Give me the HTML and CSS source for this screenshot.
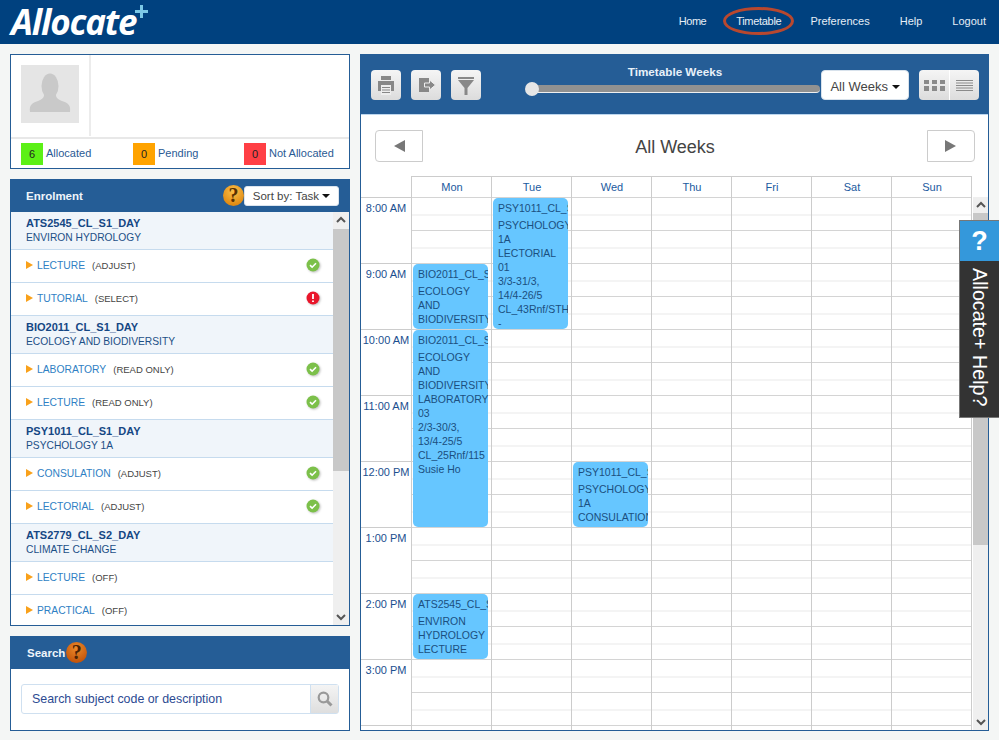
FILE: index.html
```html
<!DOCTYPE html>
<html lang="en">

<head>
  <meta charset="UTF-8" />
  <meta name="viewport" content="width=device-width, initial-scale=1.0" />
  <title>Allocate+ Timetable</title>
  <link rel="stylesheet" href="styles.css">
</head>

<body>
  <header class="topbar">
    <div class="logo">Allocate
      <svg class="logo-plus" width="13" height="13" viewBox="0 0 13 13"><path d="M5 0h3v5h5v3H8v5H5V8H0V5h5z" fill="#7cc8e6" /></svg>
    </div>
    <nav class="menu">
      <a class="menu-home">Home</a>
      <a class="menu-timetable">Timetable<span class="menu-ring"></span></a>
      <a class="menu-prefs">Preferences</a>
      <a class="menu-help">Help</a>
      <a class="menu-logout">Logout</a>
    </nav>
  </header>

  <main class="page">
    <div class="columna-izq">
      <section class="perfil">
        <div class="perfil-top">
          <div class="perfil-foto">
            <svg class="avatar" width="58" height="58" viewBox="0 0 58 58">
              <rect width="58" height="58" fill="#e5e5e5" />
              <ellipse cx="29" cy="21" rx="8.5" ry="12.5" fill="#c9c9c9" />
              <path d="M9 47c-1-7 2-9 8-11 5-2 6-4 6-6h12c0 2 1 4 6 6 6 2 9 4 8 11z" fill="#c9c9c9" />
            </svg>
          </div>
        </div>
        <div class="leyenda">
          <div class="leyenda-item item-a"><span class="caja caja-verde">6</span>Allocated</div>
          <div class="leyenda-item item-b"><span class="caja caja-naranja">0</span>Pending</div>
          <div class="leyenda-item"><span class="caja caja-roja">0</span>Not Allocated</div>
        </div>
      </section>

      <section class="panel enrolment">
        <div class="panel-head">
          <span class="panel-titulo">Enrolment</span>
          <span class="ayuda ayuda-sort">?</span>
          <button class="sort-btn">Sort by: Task <span class="caret"></span></button>
        </div>
        <div class="enrolment-body">
          <div class="lista">
            <div class="grupo"><b>ATS2545_CL_S1_DAY</b><span>ENVIRON HYDROLOGY</span></div>
            <div class="fila"><i class="bala"></i><a>LECTURE</a><small>(ADJUST)</small><svg class="estado" width="14" height="14" viewBox="0 0 14 14"><circle cx="7" cy="7" r="6.5" fill="#7cc04a" /><path d="M4 7.2l2.1 2 3.9-4" fill="none" stroke="#fff" stroke-width="1.6" /></svg></div>
            <div class="fila"><i class="bala"></i><a>TUTORIAL</a><small>(SELECT)</small><svg class="estado" width="14" height="14" viewBox="0 0 14 14"><circle cx="7" cy="7" r="6.5" fill="#e9162b" /><path d="M7 3v5M7 9.500v1.600" fill="none" stroke="#fff" stroke-width="1.8" /></svg></div>
            <div class="grupo"><b>BIO2011_CL_S1_DAY</b><span>ECOLOGY AND BIODIVERSITY</span></div>
            <div class="fila"><i class="bala"></i><a>LABORATORY</a><small>(READ ONLY)</small><svg class="estado" width="14" height="14" viewBox="0 0 14 14"><circle cx="7" cy="7" r="6.5" fill="#7cc04a" /><path d="M4 7.2l2.1 2 3.9-4" fill="none" stroke="#fff" stroke-width="1.6" /></svg></div>
            <div class="fila"><i class="bala"></i><a>LECTURE</a><small>(READ ONLY)</small><svg class="estado" width="14" height="14" viewBox="0 0 14 14"><circle cx="7" cy="7" r="6.5" fill="#7cc04a" /><path d="M4 7.2l2.1 2 3.9-4" fill="none" stroke="#fff" stroke-width="1.6" /></svg></div>
            <div class="grupo"><b>PSY1011_CL_S1_DAY</b><span>PSYCHOLOGY 1A</span></div>
            <div class="fila"><i class="bala"></i><a>CONSULATION</a><small>(ADJUST)</small><svg class="estado" width="14" height="14" viewBox="0 0 14 14"><circle cx="7" cy="7" r="6.5" fill="#7cc04a" /><path d="M4 7.2l2.1 2 3.9-4" fill="none" stroke="#fff" stroke-width="1.6" /></svg></div>
            <div class="fila"><i class="bala"></i><a>LECTORIAL</a><small>(ADJUST)</small><svg class="estado" width="14" height="14" viewBox="0 0 14 14"><circle cx="7" cy="7" r="6.5" fill="#7cc04a" /><path d="M4 7.2l2.1 2 3.9-4" fill="none" stroke="#fff" stroke-width="1.6" /></svg></div>
            <div class="grupo"><b>ATS2779_CL_S2_DAY</b><span>CLIMATE CHANGE</span></div>
            <div class="fila"><i class="bala"></i><a>LECTURE</a><small>(OFF)</small></div>
            <div class="fila"><i class="bala"></i><a>PRACTICAL</a><small>(OFF)</small></div>
          </div>
          <div class="scroll scroll-izq">
            <svg class="flecha" width="16" height="16" viewBox="0 0 16 16"><path d="M4 10l4-4 4 4" fill="none" stroke="#555" stroke-width="2" /></svg>
            <div class="scroll-pista"><div class="scroll-thumb"></div></div>
            <svg class="flecha" width="16" height="16" viewBox="0 0 16 16"><path d="M4 6l4 4 4-4" fill="none" stroke="#555" stroke-width="2" /></svg>
          </div>
        </div>
      </section>

      <section class="panel busqueda">
        <div class="panel-head panel-head-search">
          <span class="panel-titulo">Search</span>
          <span class="ayuda ayuda-search">?</span>
        </div>
        <div class="busqueda-body">
          <div class="campo">
            <input class="campo-input" type="text" placeholder="Search subject code or description">
            <span class="campo-btn">
              <svg width="18" height="18" viewBox="0 0 18 18"><circle cx="7.500" cy="7.500" r="4.800" fill="none" stroke="#999" stroke-width="2.200" /><path d="M11 11l4.500 4.500" stroke="#999" stroke-width="3" /></svg>
            </span>
          </div>
        </div>
      </section>
    </div>

    <section class="panel horario">
      <div class="toolbar">
        <button class="tool-btn">
          <svg width="30" height="30" viewBox="0 0 30 30">
            <rect x="10" y="6" width="10" height="4" fill="#888" />
            <rect x="7" y="11" width="16" height="10" fill="#888" />
            <rect x="10" y="15" width="10" height="10" fill="#eee" />
            <path d="M11 17.500h8M11 20h8M11 22.500h8" stroke="#888" />
          </svg>
        </button>
        <button class="tool-btn">
          <svg width="30" height="30" viewBox="0 0 30 30">
            <rect x="8" y="8" width="10" height="14" fill="#888" />
            <path d="M13.500 13h5v-3l6 5-6 5v-3h-5z" fill="#888" stroke="#eee" />
          </svg>
        </button>
        <button class="tool-btn">
          <svg width="30" height="30" viewBox="0 0 30 30">
            <rect x="7" y="7" width="16" height="2" fill="#888" />
            <path d="M7 10h16l-6.500 8v7h-3v-7z" fill="#888" />
          </svg>
        </button>
        <div class="semanas">
          <div class="semanas-titulo">Timetable Weeks</div>
          <div class="slider"><span class="slider-punto"></span></div>
        </div>
        <button class="select-semanas">All Weeks <span class="caret"></span></button>
        <div class="vistas">
          <span class="vista">
            <svg width="21" height="11" viewBox="0 0 21 11"><path d="M0 0h5v4H0zM8 0h5v4H8zM16 0h5v4h-5zM0 6h5v5H0zM8 6h5v5H8zM16 6h5v5h-5z" fill="#8a8a8a" /></svg>
          </span>
          <span class="vista">
            <svg width="17" height="11" viewBox="0 0 17 11"><path d="M0 .5h17M0 3h17M0 5.500h17M0 8h17M0 10.500h17" stroke="#8a8a8a" /></svg>
          </span>
        </div>
      </div>

      <div class="semana-nav">
        <button class="nav-btn nav-prev"><i class="tri-izq"></i></button>
        <h2 class="semana-titulo">All Weeks</h2>
        <button class="nav-btn nav-next"><i class="tri-der"></i></button>
      </div>

      <div class="dias">
        <div class="dia">Mon</div>
        <div class="dia">Tue</div>
        <div class="dia">Wed</div>
        <div class="dia">Thu</div>
        <div class="dia">Fri</div>
        <div class="dia">Sat</div>
        <div class="dia dia-ultimo">Sun</div>
      </div>

      <div class="calendario">
        <div class="horas">
          <div class="hora">8:00 AM</div>
          <div class="hora">9:00 AM</div>
          <div class="hora">10:00 AM</div>
          <div class="hora">11:00 AM</div>
          <div class="hora">12:00 PM</div>
          <div class="hora">1:00 PM</div>
          <div class="hora">2:00 PM</div>
          <div class="hora">3:00 PM</div>
          <div class="hora"></div>
        </div>
        <div class="col">
          <div class="evento ev-mon-9">
            <div class="ev-titulo">BIO2011_CL_S1_DAY</div>
            ECOLOGY AND BIODIVERSITY
          </div>
          <div class="evento ev-mon-10">
            <div class="ev-titulo">BIO2011_CL_S1_DAY</div>
            ECOLOGY AND BIODIVERSITY<br>LABORATORY<br>03<br>2/3-30/3,<br>13/4-25/5<br>CL_25Rnf/115<br>Susie Ho
          </div>
          <div class="evento ev-mon-14">
            <div class="ev-titulo">ATS2545_CL_S1_DAY</div>
            ENVIRON HYDROLOGY<br>LECTURE
          </div>
        </div>
        <div class="col">
          <div class="evento ev-tue-8">
            <div class="ev-titulo">PSY1011_CL_S1_DAY</div>
            PSYCHOLOGY 1A<br>LECTORIAL<br>01<br>3/3-31/3,<br>14/4-26/5<br>CL_43Rnf/STH<br>-
          </div>
        </div>
        <div class="col">
          <div class="evento ev-wed-12">
            <div class="ev-titulo">PSY1011_CL_S1_DAY</div>
            PSYCHOLOGY 1A<br>CONSULATION
          </div>
        </div>
        <div class="col"></div>
        <div class="col"></div>
        <div class="col"></div>
        <div class="col col-ultima"></div>
        <div class="scroll scroll-der">
          <svg class="flecha" width="16" height="16" viewBox="0 0 16 16"><path d="M4 10l4-4 4 4" fill="none" stroke="#555" stroke-width="2" /></svg>
          <div class="scroll-pista"><div class="scroll-thumb"></div></div>
          <svg class="flecha" width="16" height="16" viewBox="0 0 16 16"><path d="M4 6l4 4 4-4" fill="none" stroke="#555" stroke-width="2" /></svg>
        </div>
      </div>
    </section>
  </main>

  <aside class="help-tab">
    <div class="help-tab-icono">?</div>
    <div class="help-tab-texto">Allocate+ Help?</div>
  </aside>
</body>

</html>
```

FILE: styles.css
```css
* {
  box-sizing: border-box;
}

body {
  font-family: "Liberation Sans", Arial, sans-serif;
  font-size: 11px;
  margin: 0;
  height: 740px;
  overflow: hidden;
  background-color: #f4f6f5;
  color: #1c4f86;
}

button {
  font-family: inherit;
  padding: 0;
}

/* top bar */
.topbar {
  height: 44px;
  background-color: #00417f;
  display: flex;
  justify-content: space-between;
  padding: 0 13px 0 10px;
}

.logo {
  font-family: "Open Sans", sans-serif;
  font-style: italic;
  font-weight: 700;
  font-size: 35px;
  line-height: 44px;
  letter-spacing: -1.2px;
  color: white;
  position: relative;
  width: 140px;
  padding-left: 1px;
  white-space: nowrap;
}

.logo-plus {
  position: absolute;
  left: 125px;
  top: 5px;
}

.menu {
  display: flex;
  align-items: center;
  color: #e6eef6;
  font-size: 11px;
  padding-bottom: 3px;
}

.menu a {
  position: relative;
  margin-right: 30px;
}

.menu a:last-child {
  margin-right: 0;
}

.menu-home {
  letter-spacing: -0.5px;
}

.menu a.menu-timetable {
  letter-spacing: -0.3px;
  margin-right: 29px;
}

.menu-ring {
  position: absolute;
  left: -13px;
  right: -13px;
  top: -8px;
  bottom: -8px;
  border: 3px solid #b8482f;
  border-radius: 50%;
}

/* main layout */
.page {
  display: flex;
  gap: 10px;
  padding: 10px 10px 0;
}

.columna-izq {
  width: 340px;
  display: flex;
  flex-direction: column;
  gap: 10px;
}

.perfil {
  height: 115px;
  background: white;
  border: 1px solid #255d96;
}

.perfil-top {
  height: 84px;
  border-bottom: 2px solid #e8e8e8;
}

.perfil-foto {
  width: 80px;
  height: 81px;
  padding: 10px;
  border-right: 2px solid #ececec;
}

.avatar {
  display: block;
}

.leyenda {
  display: flex;
  padding: 4px 0 0 10px;
}

.leyenda-item {
  display: flex;
  align-items: center;
  gap: 3px;
  height: 20px;
  color: #2a5a94;
}

.item-a {
  width: 112px;
}

.item-b {
  width: 111px;
}

.caja {
  width: 22px;
  height: 22px;
  flex: none;
  align-self: flex-start;
  display: flex;
  justify-content: center;
  align-items: center;
  color: #222;
}

.caja-verde {
  background-color: #5cf016;
}

.caja-naranja {
  background-color: #ffa300;
}

.caja-roja {
  background-color: #ff3f45;
}

/* panels */
.panel {
  background: white;
  border: 1px solid #255d96;
  border-top: none;
}

.panel-head {
  height: 33px;
  background-color: #255d96;
  margin: 0 -1px;
  display: flex;
  align-items: center;
  padding: 0 11px 0 16px;
}

.panel-titulo {
  font-weight: bold;
  color: #eef4fa;
  font-size: 11.500px;
}

.ayuda {
  width: 21px;
  height: 21px;
  border-radius: 50%;
  background: radial-gradient(circle at 50% 30%, #fbc04a, #e08a12 75%);
  color: #5a3000;
  font-family: "Liberation Serif", serif;
  font-weight: bold;
  font-size: 20px;
  line-height: 21px;
  text-align: center;
}

.ayuda-sort {
  margin-left: auto;
}

.ayuda-search {
  background: radial-gradient(circle at 50% 30%, #ec8a2a, #c4560c 75%);
  color: #4a2206;
  margin-left: 1px;
}

.sort-btn {
  width: 95px;
  height: 20px;
  background: white;
  border: 1px solid #dbe4ee;
  border-radius: 3px;
  color: #444;
  font-size: 11.500px;
}

.caret {
  display: inline-block;
  vertical-align: middle;
  border-left: 4px solid transparent;
  border-right: 4px solid transparent;
  border-top: 4px solid #111;
}

/* enrolment list */
.enrolment {
  height: 447px;
  display: flex;
  flex-direction: column;
}

.enrolment-body {
  flex: 1;
  display: flex;
  min-height: 0;
}

.lista {
  flex: 1;
  overflow: hidden;
}

.grupo {
  height: 38px;
  padding-top: 4px;
  line-height: 14px;
  background-color: #f0f5fa;
  border-bottom: 1px solid #c6dbee;
  padding-left: 15px;
}

.grupo b,
.grupo span {
  display: block;
}

.grupo b {
  color: #154784;
}

.grupo span {
  font-size: 10.250px;
  margin-top: 1px;
}

.fila {
  height: 33px;
  display: flex;
  align-items: center;
  padding: 0 13px 2px 15px;
  border-bottom: 1px solid #c6dbee;
  background: white;
}

.bala {
  border-left: 7px solid #f9a11b;
  border-top: 4px solid transparent;
  border-bottom: 4px solid transparent;
  margin-right: 4px;
}

.fila a {
  color: #2f7fc4;
  font-size: 10.300px;
  margin-right: 7px;
}

.fila small {
  font-size: 9.500px;
  color: #444;
}

.estado {
  margin-left: auto;
  filter: drop-shadow(1px 1px 1px rgba(0, 0, 0, 0.25));
}

/* scrollbars */
.scroll {
  width: 16px;
  display: flex;
  flex-direction: column;
  background-color: #efefef;
}

.scroll-pista {
  flex: 1;
}

.scroll-thumb {
  background-color: #c8c8c8;
}

.scroll-izq .scroll-thumb {
  height: 242px;
  margin-top: 1px;
}

.scroll-der .scroll-thumb {
  height: 332px;
}

.flecha {
  display: block;
  flex: none;
}

/* search */
.busqueda {
  height: 95px;
}

.panel-head-search {
  padding-left: 17px;
}

.busqueda-body {
  padding: 15px 10px;
}

.campo {
  display: flex;
  height: 30px;
  border: 1px solid #cfe0f0;
  border-radius: 3px;
}

.campo-input {
  flex: 1;
  min-width: 0;
  border: none;
  outline: none;
  background: transparent;
  padding: 0 10px;
  font-family: inherit;
  font-size: 12.400px;
}

.campo-input::placeholder {
  color: #2c4a92;
  opacity: 1;
}

.campo-btn {
  width: 28px;
  display: flex;
  justify-content: center;
  align-items: center;
  background: linear-gradient(#f4f4f4, #dedede);
  border-left: 1px solid #cfe0f0;
}

/* timetable */
.horario {
  flex: 1;
  height: 677px;
  overflow: hidden;
}

.toolbar {
  height: 61px;
  background-color: #255d96;
  border-bottom: 1px solid #bcd6ee;
  display: flex;
  align-items: flex-start;
  gap: 10px;
  padding: 16px 9px 0 10px;
}

.tool-btn {
  width: 30px;
  height: 30px;
  background: linear-gradient(#f5f5f5, #dcdcdc);
  border: none;
  border-radius: 4px;
  flex: none;
}

.tool-btn svg {
  display: block;
}

.semanas {
  width: 296px;
  flex: none;
  margin: -5px -10px 0 34px;
}

.semanas-titulo {
  font-weight: bold;
  font-size: 11.700px;
  color: #e8f1f9;
  line-height: 14px;
  text-align: center;
  padding-left: 4px;
}

.slider {
  position: relative;
  height: 8px;
  margin: 6px 1px 0 5px;
  background-color: #919191;
  border-bottom: 1px solid #f0f0f0;
  border-radius: 0 4px 4px 0;
}

.slider-punto {
  position: absolute;
  left: -5px;
  top: -3px;
  width: 14px;
  height: 14px;
  border-radius: 50%;
  background-color: #e6e6e6;
}

.select-semanas {
  width: 88px;
  height: 30px;
  background: white;
  border: 1px solid #d8e2ec;
  border-radius: 4px;
  padding-top: 2px;
  color: #444;
  font-size: 13px;
  flex: none;
}

.vistas {
  width: 60px;
  height: 30px;
  display: flex;
  background: linear-gradient(#f5f5f5, #dcdcdc);
  border-radius: 4px;
  flex: none;
}

.vista {
  width: 30px;
  display: flex;
  justify-content: center;
  align-items: center;
}

.vista+.vista {
  border-left: 1px solid #fff;
}

.semana-nav {
  height: 61px;
  display: flex;
  justify-content: space-between;
  align-items: flex-start;
  padding: 15px 13px 0 14px;
}

.nav-btn {
  width: 48px;
  height: 32px;
  background: white;
  border: 1px solid #ccc;
  display: flex;
  justify-content: center;
  align-items: center;
}

.nav-prev {
  border-radius: 4px 0 0 4px;
}

.nav-next {
  border-radius: 0 4px 4px 0;
}

.tri-izq {
  border-right: 11px solid #777;
  border-top: 6px solid transparent;
  border-bottom: 6px solid transparent;
}

.tri-der {
  border-left: 11px solid #777;
  border-top: 6px solid transparent;
  border-bottom: 6px solid transparent;
}

.semana-titulo {
  margin: 0;
  font-weight: normal;
  font-size: 18px;
  line-height: 34px;
  color: #444;
}

.dias {
  display: flex;
  padding-left: 50px;
  height: 21px;
}

.dia {
  width: 80px;
  line-height: 20px;
  text-align: center;
  padding-left: 1px;
  border-left: 1px solid #ccc;
  border-top: 1px solid #ccc;
  color: #1b5aa0;
}

.dia-ultimo {
  width: 81px;
  border-right: 1px solid #ccc;
}

.calendario {
  display: flex;
  height: 533px;
  overflow: hidden;
  background: white;
}

.horas {
  width: 50px;
  flex: none;
}

.hora {
  height: 66px;
  border-top: 1px solid #ccc;
  padding-top: 3px;
  line-height: 14px;
  text-align: center;
  color: #1b4f8f;
}

.col {
  position: relative;
  width: 80px;
  flex: none;
  height: 100%;
  border-left: 1px solid #ccc;
  background-image: repeating-linear-gradient(to bottom, #d4d4d4 0 1px, #fff 1px 17px, #f4f4f4 17px 19px, #fff 19px 33px);
}

.col-ultima {
  width: 81px;
  border-right: 1px solid #ccc;
}

.scroll-der {
  flex: none;
  margin-left: 1px;
}

.evento {
  position: absolute;
  left: 1px;
  width: 75px;
  background-color: #66c6ff;
  border-radius: 5px;
  padding: 3px 0 0 5px;
  font-size: 10.500px;
  line-height: 14px;
  overflow: hidden;
  color: #1b4f80;
}

.ev-titulo {
  white-space: nowrap;
  margin-bottom: 3px;
}

.ev-mon-9 {
  top: 67px;
  height: 65px;
}

.ev-mon-10 {
  top: 133px;
  height: 197px;
}

.ev-mon-14 {
  top: 397px;
  height: 65px;
}

.ev-tue-8 {
  top: 1px;
  height: 131px;
}

.ev-wed-12 {
  top: 265px;
  height: 65px;
}

/* floating help tab */
.help-tab {
  position: fixed;
  right: 0;
  top: 220px;
  width: 40px;
  height: 198px;
  border: 1px solid #777;
  border-right: none;
  background-color: #333;
}

.help-tab-icono {
  height: 40px;
  background-color: #3498db;
  color: white;
  font-weight: bold;
  font-size: 27px;
  line-height: 40px;
  text-align: center;
}

.help-tab-texto {
  writing-mode: vertical-rl;
  color: white;
  font-size: 19.700px;
  line-height: 39px;
  padding-top: 7px;
  white-space: nowrap;
}
```
